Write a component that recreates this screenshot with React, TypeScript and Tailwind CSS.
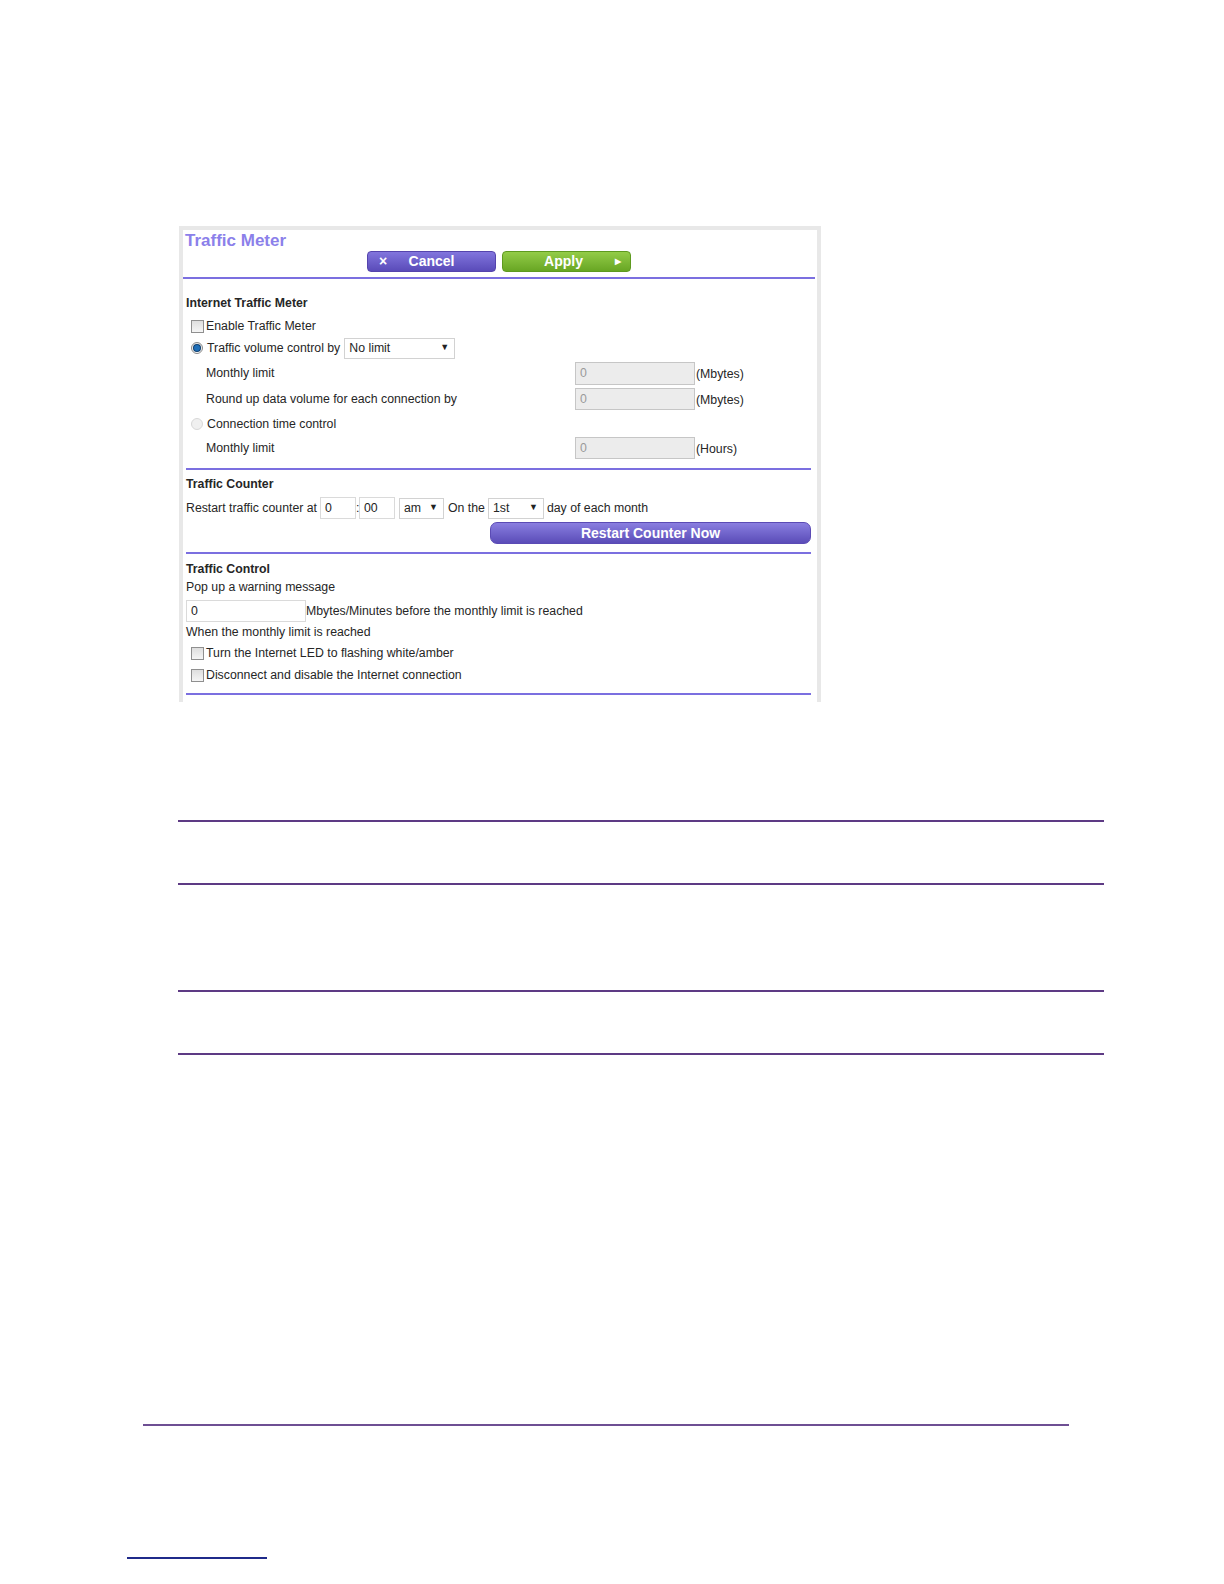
import React from 'react';

// Boxed checkbox, drawn so it looks the same in every browser.
function Check() {
  return (
    <span className="inline-block w-[13px] h-[13px] border border-[#8f8f8f] bg-gradient-to-b from-[#dedede] to-[#f5f5f5] shrink-0" />
  );
}

function Radio({ on = false, dim = false }: { on?: boolean; dim?: boolean }) {
  return (
    <span
      className={`inline-flex items-center justify-center w-[12px] h-[12px] rounded-full border shrink-0 ${
        dim ? 'border-[#d8d8d8] bg-[#f0f0f0]' : 'border-[#8a8a8a] bg-gradient-to-b from-[#e6e6e6] to-[#fafafa]'
      }`}
    >
      {on && <span className="w-[6px] h-[6px] rounded-full bg-[#1f6fb8] ring-1 ring-[#0d3f70]" />}
    </span>
  );
}

function Box({ value, w, off = false }: { value: string; w: string; off?: boolean }) {
  return (
    <span
      className={`inline-flex items-center h-[22px] px-[4px] border ${w} ${
        off ? 'bg-[#ececec] border-[#c6c6c6] text-[#9a9a9a]' : 'bg-white border-[#dadada] text-[#222]'
      }`}
    >
      {value}
    </span>
  );
}

function Pick({ value, w }: { value: string; w: string }) {
  return (
    <span className={`inline-flex items-center justify-between h-[21px] pl-[4px] pr-[5px] bg-white border border-[#d2d2d2] ${w}`}>
      <span>{value}</span>
      <span className="text-[9px] text-[#222]">▼</span>
    </span>
  );
}

function Rule({ className = '' }: { className?: string }) {
  return <div className={`h-[2px] bg-[#7b6fe0] ${className}`} />;
}

function PageRule({ className = '' }: { className?: string }) {
  return <div className={`h-[2px] bg-[#5d3a84] ${className}`} />;
}

export default function App() {
  return (
    <div className="w-[1224px] h-[1584px] bg-white font-['Liberation_Sans',Arial,sans-serif] text-[12.3px] text-[#262626] flex flex-col pt-[226px]">
      {/* Screenshot of the router page */}
      <div className="ml-[179px] w-[642px] h-[476px] border-[4px] border-b-0 border-[#e8e8e8] bg-white flex flex-col">
        <div className="h-[20px] pl-[2px] flex items-center text-[17px] font-bold text-[#8b80ea] leading-none">
          Traffic Meter
        </div>
        <div className="mt-[1px] ml-[184px] flex gap-[6px] h-[21px]">
          <div className="w-[129px] h-full rounded-[4px] border border-[#5544ad] bg-gradient-to-b from-[#8275dd] to-[#5a4bb9] text-white font-bold text-[14px] flex items-center">
            <span className="w-[30px] text-center text-[14px]">×</span>
            <span className="flex-1 text-center pr-[30px]">Cancel</span>
          </div>
          <div className="w-[129px] h-full rounded-[4px] border border-[#5e9a1f] bg-gradient-to-b from-[#93cc47] to-[#68a623] text-white font-bold text-[14px] flex items-center">
            <span className="flex-1 text-center pl-[18px]">Apply</span>
            <span className="w-[24px] text-center text-[8px]">▶</span>
          </div>
        </div>
        <Rule className="mt-[5px] mr-[2px]" />

        <div className="pl-[3px] flex flex-col">
          {/* Internet Traffic Meter */}
          <div className="mt-[12px] h-[24px] flex items-center font-bold">Internet Traffic Meter</div>
          <div className="h-[22px] flex items-center pl-[5px] gap-[2px]">
            <Check />
            <span>Enable Traffic Meter</span>
          </div>
          <div className="h-[22px] flex items-center pl-[5px] gap-[4px]">
            <Radio on />
            <span>Traffic volume control by</span>
            <Pick value="No limit" w="w-[111px]" />
          </div>
          <div className="mt-[2px] h-[24px] flex items-center pl-[20px]">
            <span className="w-[369px]">Monthly limit</span>
            <Box value="0" w="w-[120px] h-[23px]" off />
            <span className="ml-[1px] mt-[2px]">(Mbytes)</span>
          </div>
          <div className="mt-[2px] h-[24px] flex items-center pl-[20px]">
            <span className="w-[369px]">Round up data volume for each connection by</span>
            <Box value="0" w="w-[120px]" off />
            <span className="ml-[1px] mt-[2px]">(Mbytes)</span>
          </div>
          <div className="mt-[1px] h-[24px] flex items-center pl-[5px] gap-[4px]">
            <Radio dim />
            <span>Connection time control</span>
          </div>
          <div className="h-[24px] flex items-center pl-[20px]">
            <span className="w-[369px]">Monthly limit</span>
            <Box value="0" w="w-[120px]" off />
            <span className="ml-[1px] mt-[2px]">(Hours)</span>
          </div>
          <Rule className="mt-[8px] mr-[6px]" />

          {/* Traffic Counter */}
          <div className="mt-[2px] h-[24px] flex items-center font-bold">Traffic Counter</div>
          <div className="mt-[1px] h-[22px] flex items-center">
            <span className="mr-[3px]">Restart traffic counter at</span>
            <Box value="0" w="w-[36px]" />
            <span className="w-[3px] text-center">:</span>
            <Box value="00" w="w-[36px]" />
            <span className="ml-[4px]">
              <Pick value="am" w="w-[45px]" />
            </span>
            <span className="ml-[4px] mr-[3px]">On the</span>
            <Pick value="1st" w="w-[56px]" />
            <span className="ml-[3px]">day of each month</span>
          </div>
          <div className="mt-[3px] h-[22px] ml-[304px] mr-[6px] rounded-[7px] border border-[#5b4bb5] bg-gradient-to-b from-[#8a7ee0] to-[#5b4cb8] text-white font-bold text-[14px] flex items-center justify-center">
            Restart Counter Now
          </div>
          <Rule className="mt-[8px] mr-[6px]" />

          {/* Traffic Control */}
          <div className="mt-[7px] h-[16px] flex items-center font-bold">Traffic Control</div>
          <div className="mt-[2px] h-[16px] flex items-center">Pop up a warning message</div>
          <div className="mt-[5px] h-[22px] flex items-center">
            <Box value="0" w="w-[120px]" />
            <span>Mbytes/Minutes before the monthly limit is reached</span>
          </div>
          <div className="mt-[2px] h-[16px] flex items-center">When the monthly limit is reached</div>
          <div className="mt-[5px] h-[16px] flex items-center pl-[5px] gap-[2px]">
            <Check />
            <span>Turn the Internet LED to flashing white/amber</span>
          </div>
          <div className="mt-[6px] h-[16px] flex items-center pl-[5px] gap-[2px]">
            <Check />
            <span>Disconnect and disable the Internet connection</span>
          </div>
          <Rule className="mt-[10px] mr-[6px]" />
        </div>
      </div>

      {/* Document rules below the figure */}
      <PageRule className="mt-[118px] ml-[178px] w-[926px]" />
      <PageRule className="mt-[61px] ml-[178px] w-[926px]" />
      <PageRule className="mt-[105px] ml-[178px] w-[926px]" />
      <PageRule className="mt-[61px] ml-[178px] w-[926px]" />

      <div className="mt-[369px] ml-[143px] w-[926px] h-[1.5px] bg-[#6e4f93]" />
      <div className="mt-[131px] ml-[127px] w-[140px] h-[2px] bg-[#1f2a8a]" />
    </div>
  );
}
